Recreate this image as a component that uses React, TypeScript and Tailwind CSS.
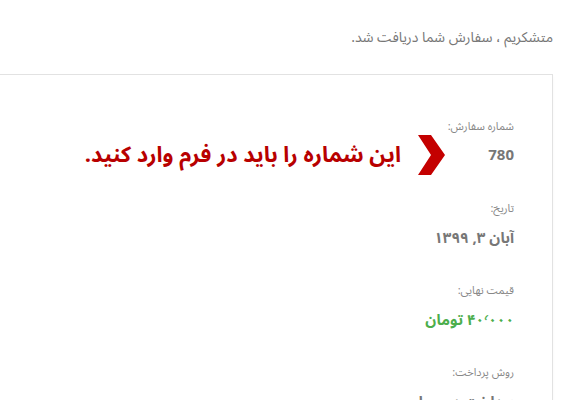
const ROWS = [
  { label: "تاریخ:", value: "آبان ۳, ۱۳۹۹", tone: "text-[#777]" },
  { label: "قیمت نهایی:", value: "۴۰٬۰۰۰ تومان", tone: "text-[#4cae4c]" },
  { label: "روش پرداخت:", value: "پرداخت در محل", tone: "text-[#777]" },
];

function Chevron() {
  return (
    <svg viewBox="0 0 28 40" className="h-[40px] w-[28px] shrink-0">
      <polygon points="1,0 14,0 28,20 14,40 1,40 14,20" fill="#c40000" />
    </svg>
  );
}

export default function App() {
  return (
    <div
      dir="rtl"
      className="h-[400px] w-[576px] overflow-hidden bg-white pr-[23px]"
      style={{ fontFamily: '"Noto Sans Arabic", "DejaVu Sans", sans-serif' }}
    >
      <p className="pt-[28px] text-[14px] leading-5 text-[#777]">
        متشکریم ، سفارش شما دریافت شد.
      </p>

      <div className="mt-[26px] -ml-px border border-l-0 border-[#e2e2e2] pr-[38px] pt-[44px] shadow-[0_2px_3px_rgba(0,0,0,0.03)]">
        <div className="flex flex-col">
          <span className="text-[11px] leading-4 text-[#888]">شماره سفارش:</span>
          <div className="flex items-center">
            <span className="w-[26px] text-[15px] font-bold leading-5 text-[#777]">780</span>
            <span className="mr-[43px]">
              <Chevron />
            </span>
            <span className="mr-[16px] text-[22px] font-bold leading-6 text-[#b80000]">
              این شماره را باید در فرم وارد کنید.
            </span>
          </div>
        </div>

        {ROWS.map((r, i) => (
          <div key={r.label} className={`${i === 0 ? "mt-[26px]" : "mt-[35px]"} flex flex-col`}>
            <span className="text-[11px] leading-4 text-[#888]">{r.label}</span>
            <span className={`mt-[11px] text-[15px] font-bold leading-5 ${r.tone}`}>
              {r.value}
            </span>
          </div>
        ))}
        <div className="h-10" />
      </div>
    </div>
  );
}
